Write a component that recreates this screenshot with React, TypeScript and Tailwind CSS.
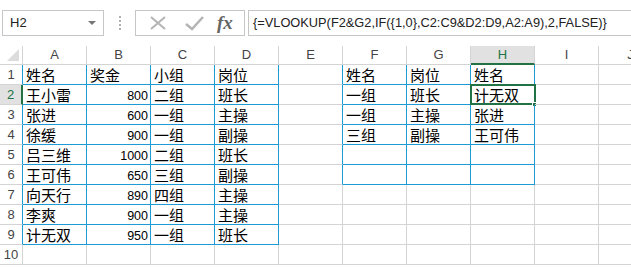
import { Fragment } from 'react';

const GRID = '#d4d4d4';
const BLUE = '#1e9bd7';

const cols = ['A', 'B', 'C', 'D', 'E', 'F', 'G', 'H', 'I', 'J'];

// sheet content, row 1..10
const data: Record<string, string> = {
  A1: '姓名', B1: '奖金', C1: '小组', D1: '岗位',
  A2: '王小雷', B2: '800', C2: '二组', D2: '班长',
  A3: '张进', B3: '600', C3: '一组', D3: '主操',
  A4: '徐缓', B4: '900', C4: '一组', D4: '副操',
  A5: '吕三维', B5: '1000', C5: '二组', D5: '班长',
  A6: '王可伟', B6: '650', C6: '三组', D6: '副操',
  A7: '向天行', B7: '890', C7: '四组', D7: '主操',
  A8: '李爽', B8: '900', C8: '一组', D8: '主操',
  A9: '计无双', B9: '950', C9: '一组', D9: '班长',
  F1: '姓名', G1: '岗位', H1: '姓名',
  F2: '一组', G2: '班长', H2: '计无双',
  F3: '一组', G3: '主操', H3: '张进',
  F4: '三组', G4: '副操', H4: '王可伟',
};

// blue bordered ranges: [c0, c1, r0, r1]
const tables = [
  [0, 3, 1, 9],
  [5, 7, 1, 6],
];

const inTable = (c: number, r: number) =>
  tables.some(([c0, c1, r0, r1]) => c >= c0 && c <= c1 && r >= r0 && r <= r1);

function Cell({ c, r }: { c: number; r: number }) {
  const key = cols[c] + r;
  const v = data[key];
  const right = inTable(c, r) || inTable(c + 1, r) ? BLUE : GRID;
  const bottom = inTable(c, r) || inTable(c, r + 1) ? BLUE : GRID;
  const isNum = v !== undefined && /^\d+$/.test(v);
  const selected = key === 'H2';
  return (
    <div
      className="relative flex items-end h-[20px] border-r border-b"
      style={{ borderRightColor: right, borderBottomColor: bottom }}
    >
      {v && (
        <span
          className={
            isNum
              ? "w-full text-right pr-[2px] text-[12.5px] leading-[16px] text-black font-['Liberation_Sans',sans-serif]"
              : "pl-[3px] text-[15px] leading-[18px] text-black font-['Noto_Sans_CJK_SC',sans-serif]"
          }
        >
          {v}
        </span>
      )}
      {selected && (
        <>
          <div className="absolute -left-[1px] -top-[1px] w-[66px] h-[21px] border-2 border-[#217346]" />
          <div className="absolute -right-[3px] -bottom-[3px] w-[5px] h-[5px] bg-[#217346] border border-white" />
        </>
      )}
    </div>
  );
}

function FormulaBar() {
  return (
    <div className="flex items-center h-[46px] pb-[11px] pt-[10px] pl-[2px]">
      <div className="flex items-center justify-between w-[102px] h-[26px] border border-[#c6c6c6] bg-white pl-[7px] pr-[7px]">
        <span className="text-[13px] text-[#222] font-['Liberation_Sans',sans-serif]">H2</span>
        <span className="w-0 h-0 border-l-[4px] border-r-[4px] border-t-[4px] border-l-transparent border-r-transparent border-t-[#777]" />
      </div>
      <div className="w-[31px] flex justify-center">
        <span className="flex flex-col gap-[2px]">
          <span className="w-[2px] h-[2px] bg-[#b0b0b0]" />
          <span className="w-[2px] h-[2px] bg-[#b0b0b0]" />
          <span className="w-[2px] h-[2px] bg-[#b0b0b0]" />
          <span className="w-[2px] h-[2px] bg-[#b0b0b0]" />
        </span>
      </div>
      <div className="flex items-center w-[110px] h-[26px] border border-[#c6c6c6] bg-white">
        <svg width="38" height="24" viewBox="0 0 38 24" className="ml-[3px]">
          <path d="M12 6 L26 18 M26 6 L12 18" stroke="#b4b4b4" strokeWidth="2" fill="none" />
        </svg>
        <svg width="34" height="24" viewBox="0 0 34 24">
          <path d="M9 13 L15 18 L26 6" stroke="#b4b4b4" strokeWidth="2.5" fill="none" />
        </svg>
        <span className="ml-[6px] text-[19px] italic font-bold text-[#666] font-['Liberation_Serif',serif] leading-none">
          fx
        </span>
      </div>
      <div className="flex items-center flex-1 h-[26px] ml-[3px] border-t border-l border-b border-[#c6c6c6] bg-white pl-[4px]">
        <span className="text-[12.8px] text-[#222] font-['Liberation_Sans',sans-serif] whitespace-nowrap">
          {'{=VLOOKUP(F2&G2,IF({1,0},C2:C9&D2:D9,A2:A9),2,FALSE)}'}
        </span>
      </div>
    </div>
  );
}

export default function App() {
  const rows = Array.from({ length: 10 }, (_, i) => i + 1);
  return (
    <div className="w-[631px] h-[267px] overflow-hidden bg-white">
      <FormulaBar />
      <div className="grid grid-cols-[23px_repeat(10,64px)]">
        {/* select-all corner */}
        <div className="relative h-[19px] border-r border-b border-[#d4d4d4]">
          <svg width="14" height="14" className="absolute right-[2px] bottom-[2px]">
            <path d="M13 1 L13 13 L1 13 Z" fill="#dcdcdc" />
          </svg>
        </div>
        {cols.map((c) => (
          <div
            key={c}
            className={
              c === 'H'
                ? 'flex items-center justify-center h-[19px] bg-[#e1e1e1] border-r border-[#d4d4d4] border-b-2 border-b-[#217346] text-[13px] text-[#217346] font-["Liberation_Sans",sans-serif]'
                : 'flex items-center justify-center h-[19px] border-r border-b border-[#d4d4d4] text-[13px] text-[#444] font-["Liberation_Sans",sans-serif]'
            }
          >
            {c}
          </div>
        ))}
        {rows.map((r) => (
          <Fragment key={r}>
            <div
              className={
                r === 2
                  ? 'flex items-center justify-center h-[20px] bg-[#e1e1e1] border-b border-b-[#d4d4d4] border-r-2 border-r-[#217346] text-[13px] text-[#217346] font-["Liberation_Sans",sans-serif]'
                  : 'flex items-center justify-center h-[20px] border-b border-r border-[#d4d4d4] text-[13px] text-[#444] font-["Liberation_Sans",sans-serif]'
              }
              style={r !== 2 && r <= 9 ? { borderRightColor: BLUE } : undefined}
            >
              {r}
            </div>
            {cols.map((_, ci) => (
              <Cell key={ci} c={ci} r={r} />
            ))}
          </Fragment>
        ))}
      </div>
    </div>
  );
}
